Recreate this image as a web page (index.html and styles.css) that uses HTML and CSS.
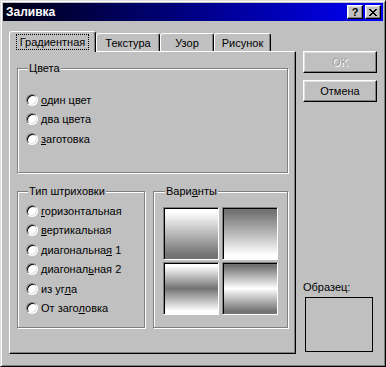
FILE: index.html
```html
<!DOCTYPE html>
<html lang="ru">
<head>
  <meta charset="UTF-8">
  <title>Заливка</title>
  <link rel="stylesheet" href="styles.css">
</head>
<body>
  <div class="window">
    <div class="titlebar">
      <span class="title">Заливка</span>
      <div class="title-buttons">
        <button class="tbtn help">?</button>
        <button class="tbtn">
          <svg width="8" height="7" viewBox="0 0 8 7" shape-rendering="crispEdges">
            <path d="M0 0h2v1h-2z M6 0h2v1h-2z M1 1h2v1h-2z M5 1h2v1h-2z M2 2h4v1h-4z M3 3h2v1h-2z M2 4h4v1h-4z M1 5h2v1h-2z M5 5h2v1h-2z M0 6h2v1h-2z M6 6h2v1h-2z" fill="#000"/>
          </svg>
        </button>
      </div>
    </div>

    <div class="dialog">
      <div class="main">
        <div class="tabs">
          <div class="tab active"><span class="focus">Градиентная</span></div>
          <div class="tab tab-texture">Текстура</div>
          <div class="tab tab-pattern">Узор</div>
          <div class="tab tab-picture">Рисунок</div>
        </div>

        <div class="panel">
          <fieldset class="group colors">
            <legend>Цвета</legend>
            <label class="radio"><span class="dot"></span><span><u>о</u>дин цвет</span></label>
            <label class="radio"><span class="dot"></span><span><u>д</u>ва цвета</span></label>
            <label class="radio"><span class="dot"></span><span><u>з</u>аготовка</span></label>
          </fieldset>

          <div class="row">
            <fieldset class="group shading">
              <legend>Тип штриховки</legend>
              <label class="radio"><span class="dot"></span><span><u>г</u>оризонтальная</span></label>
              <label class="radio"><span class="dot"></span><span><u>в</u>ертикальная</span></label>
              <label class="radio"><span class="dot"></span><span>диагональна<u>я</u> 1</span></label>
              <label class="radio"><span class="dot"></span><span>диагонал<u>ь</u>ная 2</span></label>
              <label class="radio"><span class="dot"></span><span>из уг<u>л</u>а</span></label>
              <label class="radio"><span class="dot"></span><span>От заго<u>л</u>овка</span></label>
            </fieldset>

            <fieldset class="group variants">
              <legend>Вари<u>а</u>нты</legend>
              <div class="swatches">
                <div class="swatch down"></div>
                <div class="swatch up"></div>
                <div class="swatch dark-mid"></div>
                <div class="swatch light-mid"></div>
              </div>
            </fieldset>
          </div>
        </div>
      </div>

      <div class="side">
        <button class="btn" disabled>OK</button>
        <button class="btn cancel">Отмена</button>
        <div class="sample-label">Образец:</div>
        <div class="sample"></div>
      </div>
    </div>
  </div>
</body>
</html>
```

FILE: styles.css
```css
/* Win98 style dialog */
:root {
  --face: #c0c0c0;
  --light: #dfdfdf;
  --shadow: #808080;
}

* {
  box-sizing: border-box;
}

body {
  margin: 0;
  background-color: var(--face);
  font-family: 'Liberation Sans', Arial, sans-serif;
  font-size: 11px;
  color: #000;
}

.window {
  width: 386px;
  height: 367px;
  padding: 2px;
  border: 1px solid;
  border-color: var(--light) #000 #000 var(--light);
  box-shadow: inset 1px 1px #fff, inset -1px -1px var(--shadow);
  background-color: var(--face);
}

.titlebar {
  height: 18px;
  display: flex;
  align-items: center;
  justify-content: space-between;
  padding: 0 2px 0 3px;
  background: linear-gradient(to right, #000014, #0000f8);
  color: #fff;
  font-size: 12px;
  font-weight: bold;
}

.title-buttons {
  display: flex;
  gap: 2px;
}

.tbtn {
  width: 16px;
  height: 14px;
  padding: 0;
  display: flex;
  align-items: center;
  justify-content: center;
  border: 1px solid;
  border-color: #fff #000 #000 #fff;
  box-shadow: inset -1px -1px var(--shadow), inset 1px 1px var(--light);
  background-color: var(--face);
  font-family: inherit;
  font-size: 11px;
  font-weight: bold;
  color: #000;
}

.dialog {
  display: flex;
  padding: 10px 0 0 6px;
}

.main {
  width: 287px;
}

/* Tabs */
.tabs {
  display: flex;
  align-items: flex-end;
  height: 20px;
}

.tab {
  height: 18px;
  display: flex;
  align-items: center;
  justify-content: center;
  border: 1px solid;
  border-bottom: none;
  border-color: #fff #000 transparent #fff;
  border-radius: 3px 3px 0 0;
  box-shadow: inset -1px 0 var(--shadow);
  background-color: var(--face);
}

.tab.active {
  width: 87px;
  height: 21px;
  margin-bottom: -1px;
  position: relative;
  z-index: 1;
  padding-bottom: 1px;
}

.tab-texture { width: 64px; }
.tab-pattern { width: 54px; }
.tab-picture { width: 57px; }

.focus {
  height: 16px;
  padding: 0 3px;
  display: flex;
  align-items: center;
  border: 1px dotted #000;
}

.panel {
  height: 303px;
  padding: 10px 0 0 7px;
  border: 1px solid;
  border-color: #fff #000 #000 #fff;
  box-shadow: inset -1px -1px var(--shadow);
}

/* Group boxes */
.group {
  margin: 0;
  padding: 0 0 0 8px;
  min-width: 0;
  border: 1px solid var(--shadow);
  box-shadow: inset 1px 1px #fff, 1px 1px #fff;
}

.group legend {
  margin-left: 2px;
  padding: 0 1px;
  line-height: 13px;
  background-color: var(--face);
}

.colors {
  width: 271px;
  height: 111px;
  padding-top: 15px;
}

.row {
  display: flex;
  gap: 8px;
  margin-top: 12px;
}

.shading {
  width: 128px;
  height: 143px;
  padding-top: 3px;
}

.variants {
  width: 135px;
  height: 143px;
  padding: 9px 0 0 9px;
}

.radio {
  display: flex;
  align-items: center;
  gap: 3px;
  height: 19.5px;
  white-space: nowrap;
}

.dot {
  flex: none;
  width: 12px;
  height: 12px;
  border: 1px solid;
  border-color: var(--shadow) #fff #fff var(--shadow);
  border-radius: 50%;
  box-shadow: inset 1px 1px #000, inset -1px -1px var(--light);
  background-color: #fff;
}

/* Gradient variants */
.swatches {
  display: grid;
  grid-template-columns: 56px 56px;
  grid-template-rows: 53px 53px;
  gap: 2px 3px;
}

.swatch {
  border: 1px solid;
  border-color: var(--shadow) #fff #fff var(--shadow);
  box-shadow: inset 1px 1px #000;
}

.swatch.down {
  background: linear-gradient(#fff 8%, #737373 92%);
}

.swatch.up {
  background: linear-gradient(#737373 8%, #fff 92%);
}

.swatch.dark-mid {
  background: linear-gradient(#fff 6%, #737373 50%, #fff 94%);
}

.swatch.light-mid {
  background: linear-gradient(#737373 6%, #fff 50%, #737373 94%);
}

/* Right column */
.side {
  width: 74px;
  margin-left: 7px;
  padding-top: 20px;
  display: flex;
  flex-direction: column;
}

.btn {
  height: 22px;
  padding: 0;
  border: 1px solid;
  border-color: #fff #000 #000 #fff;
  box-shadow: inset -1px -1px var(--shadow), inset 1px 1px var(--light);
  background-color: var(--face);
  font-family: inherit;
  font-size: 11px;
  color: #000;
}

.btn:disabled {
  color: #a0a0a0;
  text-shadow: 1px 1px #fff;
}

.cancel {
  margin-top: 7px;
}

.sample-label {
  margin-top: auto;
  line-height: 13px;
}

.sample {
  width: 68px;
  height: 55px;
  margin: 3px 0 2px 2px;
  border: 1px solid #000;
}
```
